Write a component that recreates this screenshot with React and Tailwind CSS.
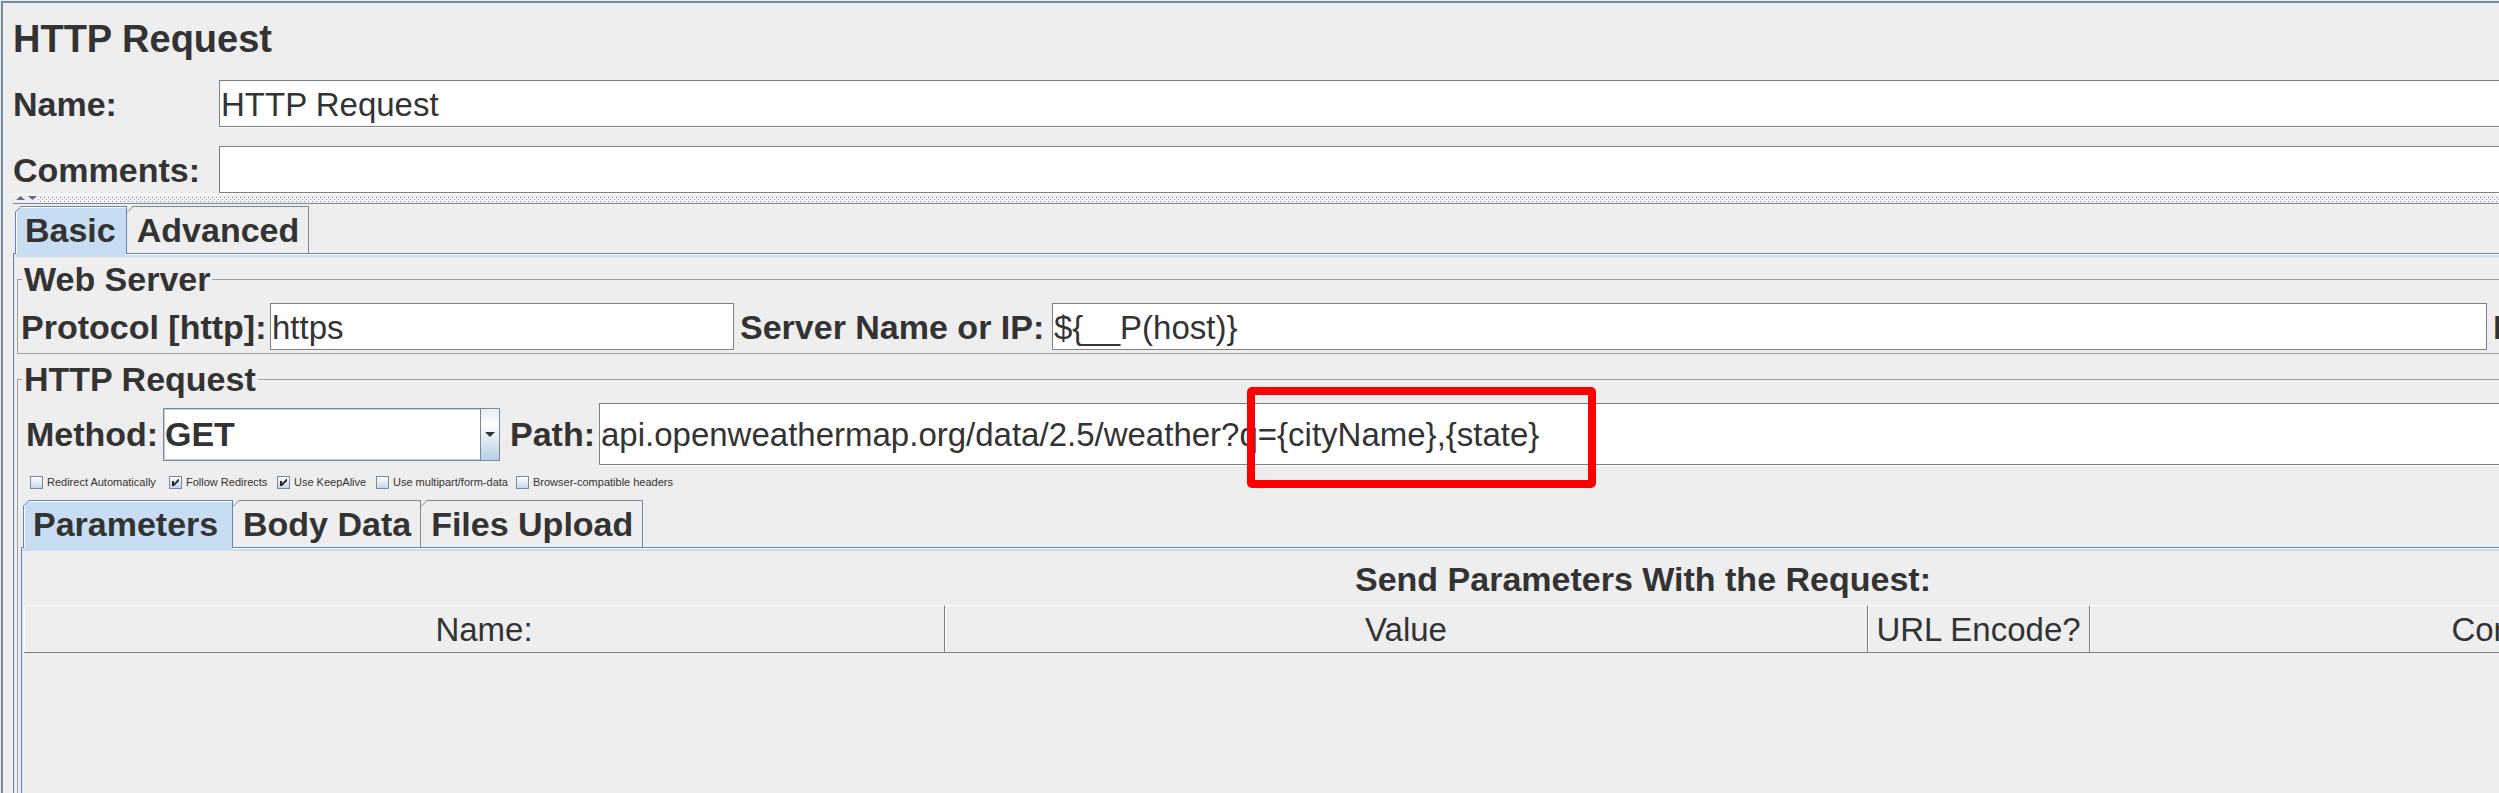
const FIELD =
  "min-w-0 border border-[#7a8084] bg-white pl-px pt-[2px] text-[33px] leading-10 text-[#333] shadow-[0_1px_0_#fff] outline-none";
const LABEL = "shrink-0 whitespace-nowrap text-[34px] font-bold leading-10";

function Tab({ active, className = "", children }) {
  return (
    <button
      type="button"
      role="tab"
      aria-selected={active}
      className={
        "relative h-[47px] whitespace-nowrap border border-b-0 text-[34px] font-bold leading-10 " +
        (active
          ? "border-[#6382bf] bg-[#c8ddf2] pl-[9px] pr-[10px] text-left shadow-[inset_1px_1px_0_#fff] after:absolute after:inset-x-0 after:-bottom-[3px] after:z-10 after:h-[3px] after:bg-[#c8ddf2] "
          : "border-l-0 border-[#7a8a99] pl-[10px] pr-[9px] ") +
        className
      }
    >
      <svg
        aria-hidden="true"
        className={active ? "absolute -left-px -top-px" : "absolute left-0 -top-px"}
        width="7"
        height="7"
        viewBox="0 0 7 7"
      >
        <path d="M0 0H6L0 6Z" fill="#eee" />
        <path d="M0 6.5L6.5 0" stroke={active ? "#6382bf" : "#7a8a99"} fill="none" />
      </svg>
      {children}
    </button>
  );
}

function Group({ title, className, children }) {
  return (
    <fieldset className={"min-w-0 border border-r-0 border-[#a0a0a0] " + className}>
      <legend className="ml-1 px-[2px] text-[34px] font-bold leading-10">{title}</legend>
      {children}
    </fieldset>
  );
}

function Check({ label, checked }) {
  return (
    <label className="flex items-center gap-1 whitespace-nowrap text-[11px] leading-[13px]">
      <span className="relative flex size-[13px]">
        <input
          type="checkbox"
          defaultChecked={checked}
          className="peer size-[13px] appearance-none border border-[#7a8a99] bg-linear-to-b from-white to-[#c5d5e8]"
        />
        <svg
          aria-hidden="true"
          className="pointer-events-none absolute left-0 top-0 hidden peer-checked:block"
          width="13"
          height="13"
          viewBox="0 0 13 13"
        >
          <path d="M3 5H5V7.500L9.300 3H10V5L5 10H3Z" fill="#222" />
        </svg>
      </span>
      {label}
    </label>
  );
}

const COLUMNS = [
  { name: "Name:", width: "w-[921px]" },
  { name: "Value", width: "w-[923px]" },
  { name: "URL Encode?", width: "w-[222px]" },
  { name: "Content-Type", width: "w-[922px]" },
  { name: "Include Equals?", width: "w-[250px]" },
];

export default function App() {
  return (
    <div className="min-h-screen overflow-hidden bg-[#e4eef6] pl-px pt-px font-['Liberation_Sans',Arial,sans-serif] text-[#333]">
      <main className="flex min-h-[792px] flex-col border-l-2 border-t-2 border-[#7a8a99] bg-[#eee] pl-[10px]">
        <h1 className="pt-[14px] text-[38px] font-bold leading-[44px]">HTTP Request</h1>

        <div className="mt-[19px] flex items-center">
          <label htmlFor="name" className={LABEL + " w-[206px]"}>Name:</label>
          <input id="name" defaultValue="HTTP Request" className={FIELD + " h-[47px] flex-1 border-r-0"} />
        </div>
        <div className="mt-[19px] flex items-center">
          <label htmlFor="comments" className={LABEL + " w-[206px]"}>Comments:</label>
          <input id="comments" className={FIELD + " h-[47px] flex-1 border-r-0"} />
        </div>

        <div className="mt-px flex h-[10px] items-start border-b border-t border-[#7a8a99] border-t-white">
          <svg aria-hidden="true" width="100%" height="8">
            <defs>
              <pattern id="bumps" width="4" height="4" patternUnits="userSpaceOnUse">
                <rect width="4" height="4" fill="#f4f4f8" />
                <rect x="1" y="0" width="1" height="1" fill="#8a90a0" />
                <rect x="3" y="2" width="1" height="1" fill="#8a90a0" />
              </pattern>
            </defs>
            <rect x="24" y="2" width="100%" height="5" fill="url(#bumps)" />
            <path d="M3 5H12L7.500 1Z" fill="#5a6a9c" />
            <path d="M15 1H24L19.500 5Z" fill="#5a6a9c" />
          </svg>
        </div>

        <div role="tablist" className="mt-[2px] flex items-start pl-[2px]">
          <Tab active>Basic</Tab>
          <Tab>Advanced</Tab>
        </div>

        <section className="flex flex-1 flex-col border-l border-t border-[#6382bf] shadow-[inset_0_1px_0_#fff,inset_0_3px_0_#c8ddf2,inset_1px_0_0_#dce8f4]">
          <div className="flex flex-1 flex-col pl-[3px] pt-[5px]">
            <Group title="Web Server" className="pb-[3px]">
              <div className="flex items-center overflow-hidden pl-[3px] pt-1">
                <label htmlFor="protocol" className={LABEL + " w-[249px]"}>Protocol [http]:</label>
                <input id="protocol" defaultValue="https" className={FIELD + " h-[47px] w-[464px]"} />
                <label htmlFor="server" className={LABEL + " w-[318px] pl-[6px]"}>Server Name or IP:</label>
                <input id="server" defaultValue="${__P(host)}" className={FIELD + " h-[47px] flex-1"} />
                <span className={LABEL + " w-3 overflow-hidden pl-[6px]"}>Port Number:</span>
              </div>
            </Group>

            <Group title="HTTP Request" className="mt-[5px] flex-1 border-b-0">
              <div className="mt-1 flex items-center pl-2">
                <label htmlFor="method" className={LABEL + " w-[137px]"}>Method:</label>
                <div className="relative h-[53px] w-[337px]">
                  <select
                    id="method"
                    className="h-full w-full appearance-none border border-[#7a8a99] bg-white pl-px text-[34px] font-bold leading-10 shadow-[inset_1px_1px_0_#b8cfe5,inset_-1px_-1px_0_#b8cfe5] outline-none"
                  >
                    <option>GET</option>
                  </select>
                  <span className="pointer-events-none absolute inset-y-0 right-0 flex w-5 items-center justify-center border border-[#7a8a99] bg-linear-to-b from-[#e4edf8] via-white via-30% to-[#b8cfe5]">
                    <svg aria-hidden="true" width="10" height="5" viewBox="0 0 10 5">
                      <path d="M0 0H10L5 5Z" fill="#333" />
                    </svg>
                  </span>
                </div>
                <label htmlFor="path" className={LABEL + " w-[99px] pl-[10px]"}>Path:</label>
                <div className="relative flex min-w-0 flex-1">
                  <input
                    id="path"
                    defaultValue="api.openweathermap.org/data/2.5/weather?q={cityName},{state}"
                    className={FIELD + " h-[62px] flex-1 border-r-0"}
                  />
                  <div className="pointer-events-none absolute -top-4 left-[648px] h-[101px] w-[349px] rounded-[5px] border-8 border-[#fe0000]" />
                </div>
              </div>

              <div className="mt-[11px] grid grid-cols-[139px_108px_99px_140px_auto] pl-3">
                <Check label="Redirect Automatically" />
                <Check label="Follow Redirects" checked />
                <Check label="Use KeepAlive" checked />
                <Check label="Use multipart/form-data" />
                <Check label="Browser-compatible headers" />
              </div>

              <div role="tablist" className="mt-[11px] flex items-start pl-[5px]">
                <Tab active className="min-w-[210px]">Parameters</Tab>
                <Tab>Body Data</Tab>
                <Tab>Files Upload</Tab>
              </div>

              <div className="ml-[3px] min-h-[246px] overflow-hidden border-l border-t border-[#6382bf] pl-[2px] pt-[11px] shadow-[inset_0_1px_0_#fff,inset_0_3px_0_#c8ddf2,inset_1px_0_0_#dce8f4]">
                <table className="w-[3238px] table-fixed border-separate border-spacing-0">
                  <caption className="pb-[6px] text-[34px] font-bold leading-10">
                    Send Parameters With the Request:
                  </caption>
                  <thead>
                    <tr>
                      {COLUMNS.map((c) => (
                        <th
                          key={c.name}
                          className={
                            "h-12 whitespace-nowrap border-b border-r border-t border-[#7a8084] border-t-white p-0 pt-[2px] text-center text-[33px] font-normal leading-10 shadow-[inset_1px_0_0_#fff] " +
                            c.width
                          }
                        >
                          {c.name}
                        </th>
                      ))}
                    </tr>
                  </thead>
                </table>
              </div>
            </Group>
          </div>
        </section>
      </main>
    </div>
  );
}
